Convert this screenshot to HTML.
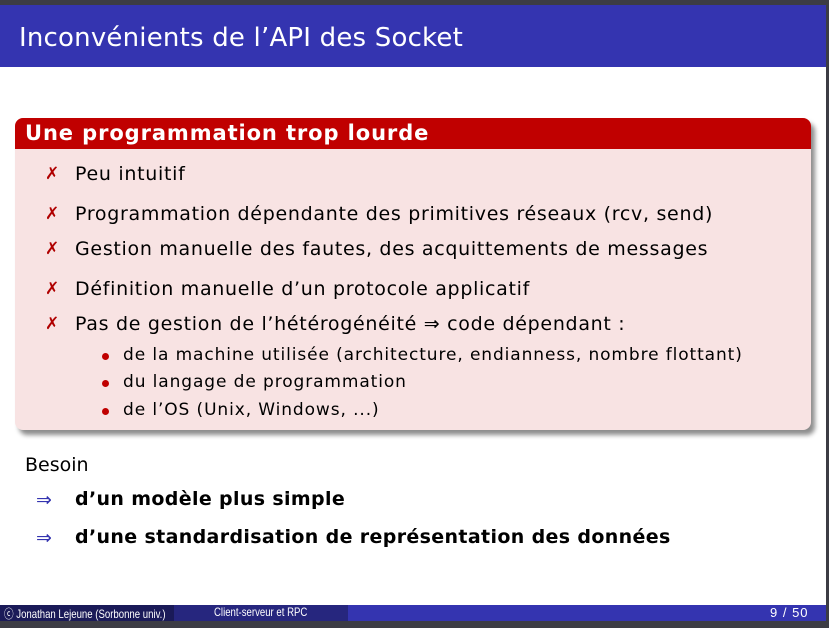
<!DOCTYPE html>
<html><head><meta charset="utf-8"><style>
body{margin:0;width:829px;height:628px;position:relative;overflow:hidden;background:#fff;font-family:"DejaVu Sans","Liberation Sans",sans-serif;}
.a{position:absolute;white-space:nowrap}
.x{color:#b00000;font-size:17px}
.it{font-size:19px;color:#000;letter-spacing:0.7px}
.sub{font-size:17px;color:#000;letter-spacing:0.9px}
.dot{position:absolute;width:7px;height:7px;border-radius:50%;background:#c00000}
.f{font-family:"Liberation Sans",sans-serif;font-size:12px;color:#fff;top:605px;transform-origin:0 0;transform:scaleX(0.8)}
</style></head><body>
<div class="a" style="left:0;top:0;width:829px;height:5px;background:#3c3c44"></div>
<div class="a" style="left:826px;top:0;width:3px;height:628px;background:#3c3c44"></div>
<div class="a" style="left:0;top:5px;width:826px;height:62px;background:#3434b0"></div>
<div class="a" style="left:19px;top:23px;font-size:26px;color:#fff;letter-spacing:0.2px">Inconvénients de l’API des Socket</div>

<div class="a" style="left:15px;top:118px;width:796px;height:312px;border-radius:8px;background:#f8e3e3;box-shadow:4px 5px 5px rgba(0,0,0,0.45)"></div>
<div class="a" style="left:15px;top:118px;width:796px;height:31px;border-radius:8px 8px 0 0;background:#c00000"></div>
<div class="a" style="left:25px;top:121px;font-size:21px;font-weight:bold;color:#fff;letter-spacing:0.9px">Une programmation trop lourde</div>

<div class="a x" style="left:45px;top:164px">✗</div><div class="a it" style="left:75px;top:163px">Peu intuitif</div>
<div class="a x" style="left:45px;top:204px">✗</div><div class="a it" style="left:75px;top:203px">Programmation dépendante des primitives réseaux (rcv, send)</div>
<div class="a x" style="left:45px;top:239px">✗</div><div class="a it" style="left:75px;top:238px">Gestion manuelle des fautes, des acquittements de messages</div>
<div class="a x" style="left:45px;top:279px">✗</div><div class="a it" style="left:75px;top:278px">Définition manuelle d’un protocole applicatif</div>
<div class="a x" style="left:45px;top:314px">✗</div><div class="a it" style="left:75px;top:313px">Pas de gestion de l’hétérogénéité ⇒ code dépendant :</div>
<div class="dot" style="left:102px;top:353px"></div><div class="a sub" style="left:123px;top:345px">de la machine utilisée (architecture, endianness, nombre flottant)</div>
<div class="dot" style="left:102px;top:380px"></div><div class="a sub" style="left:123px;top:372px">du langage de programmation</div>
<div class="dot" style="left:102px;top:408px"></div><div class="a sub" style="left:123px;top:400px">de l’OS (Unix, Windows, ...)</div>

<div class="a" style="left:25px;top:454px;font-size:19px;color:#000">Besoin</div>
<div class="a" style="left:36px;top:489px;font-size:19px;color:#3434b0">⇒</div>
<div class="a" style="left:75px;top:488px;font-size:19px;font-weight:bold;letter-spacing:0.35px">d’un modèle plus simple</div>
<div class="a" style="left:36px;top:527px;font-size:19px;color:#3434b0">⇒</div>
<div class="a" style="left:75px;top:526px;font-size:19px;font-weight:bold;letter-spacing:0.35px">d’une standardisation de représentation des données</div>

<div class="a" style="left:0;top:605px;width:174px;height:16px;background:#1a1a58"></div>
<div class="a" style="left:174px;top:605px;width:174px;height:16px;background:#26267e"></div>
<div class="a" style="left:348px;top:605px;width:478px;height:16px;background:#3434b0"></div>
<div class="a" style="left:0;top:621px;width:829px;height:7px;background:#3c3c44"></div>
<div class="a f" style="left:4px">ⓒ Jonathan Lejeune (Sorbonne univ.)</div>
<div class="a f" style="left:214px">Client-serveur et RPC</div>
<div class="a" style="left:770px;top:605px;font-family:'Liberation Sans',sans-serif;font-size:13px;color:#fff;letter-spacing:1px">9 / 50</div>
</body></html>
